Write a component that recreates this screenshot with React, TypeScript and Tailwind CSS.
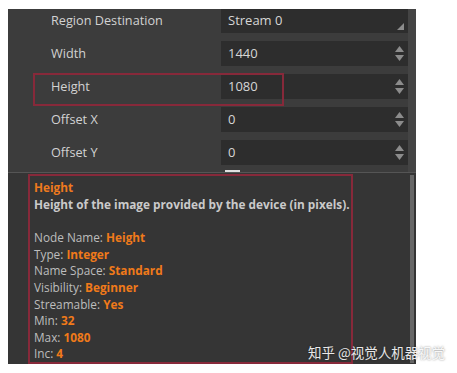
import React from "react";

const rows = [
  { label: "Region Destination", value: "Stream 0", kind: "enum" },
  { label: "Width", value: "1440", kind: "int" },
  { label: "Height", value: "1080", kind: "int" },
  { label: "Offset X", value: "0", kind: "int" },
  { label: "Offset Y", value: "0", kind: "int" },
];

const info: [string, string][] = [
  ["Node Name: ", "Height"],
  ["Type: ", "Integer"],
  ["Name Space: ", "Standard"],
  ["Visibility: ", "Beginner"],
  ["Streamable: ", "Yes"],
  ["Min: ", "32"],
  ["Max: ", "1080"],
  ["Inc: ", "4"],
];

function Spinner() {
  return (
    <div className="flex flex-col items-center gap-[3px] pr-[4px]">
      <svg width="9" height="6" viewBox="0 0 9 6">
        <path d="M4.5 0 L9 6 L0 6 Z" fill="#8c8c8c" />
      </svg>
      <svg width="9" height="6" viewBox="0 0 9 6">
        <path d="M0 0 L9 0 L4.5 6 Z" fill="#8c8c8c" />
      </svg>
    </div>
  );
}

function Corner() {
  return (
    <svg width="7" height="7" viewBox="0 0 7 7" className="self-end mb-[3px] mr-[4px]">
      <path d="M7 0 L7 7 L0 7 Z" fill="#8c8c8c" />
    </svg>
  );
}

export default function App() {
  return (
    <div
      className="w-[457px] h-[373px] bg-white pt-[9px] pl-[8px]"
      style={{ fontFamily: '"Open Sans", "Noto Sans", sans-serif' }}
    >
      <div className="relative w-[408px] h-[355px] bg-[#3c3c3c] flex flex-col overflow-hidden">
        {/* Property grid */}
        <div className="flex h-[167px]">
          <div className="flex-1 flex flex-col gap-[8px]">
            {rows.map((r, i) => (
              <div key={r.label} className={`flex ${i === 0 ? "h-[24px]" : "h-[25px]"}`}>
                <div className="w-[213px] pl-[43px] flex items-center text-[12.7px] text-[#d2d2d2]">
                  {r.label}
                </div>
                <div className="flex-1 bg-[#2d2d2d] flex items-center justify-between pl-[7px] text-[13px] text-[#d6d6d6]">
                  <span>{r.value}</span>
                  {r.kind === "enum" ? <Corner /> : <Spinner />}
                </div>
              </div>
            ))}
          </div>
          <div className="w-[8px] bg-[#444444]" />
        </div>

        {/* splitter */}
        <div className="relative h-[2px] bg-[#555555]">
          <div className="absolute left-[217px] -top-[2px] w-[15px] h-[2px] bg-[#e0e0e0]" />
        </div>

        {/* Description area */}
        <div className="flex-1 flex bg-[#353535] pl-[20px] pt-[1px]">
          <div className="w-[325px] border-2 border-[#87293a] px-[4px] pt-[3px] text-[11.8px] leading-[16.6px] text-[#bdbdbd]">
            <div className="font-bold text-[#ee7a1e]">Height</div>
            <div className="font-bold text-[#cacaca] whitespace-nowrap">Height of the image provided by the device (in pixels).</div>
            <div>&nbsp;</div>
            {info.map(([k, v]) => (
              <div key={k}>
                {k}
                <span className="font-bold text-[#f07a1a]">{v}</span>
              </div>
            ))}
          </div>
          <div className="flex-1 flex justify-end pr-[2px] py-[1px]">
            <div className="w-[4px] h-full bg-[#676767]" />
          </div>
        </div>

        {/* annotation highlight */}
        <div className="absolute left-[25px] top-[64px] w-[251px] h-[33px] border-2 border-[#87293a]" />
      </div>

      {/* watermark */}
      <div
        className="absolute left-[308px] top-[342px] text-[13.5px] text-white/90 whitespace-nowrap"
        style={{ fontFamily: '"Noto Sans CJK SC", sans-serif', textShadow: "0 0 2px rgba(0,0,0,0.5)" }}
      >
        知乎 @视觉人机器视觉
      </div>
    </div>
  );
}
